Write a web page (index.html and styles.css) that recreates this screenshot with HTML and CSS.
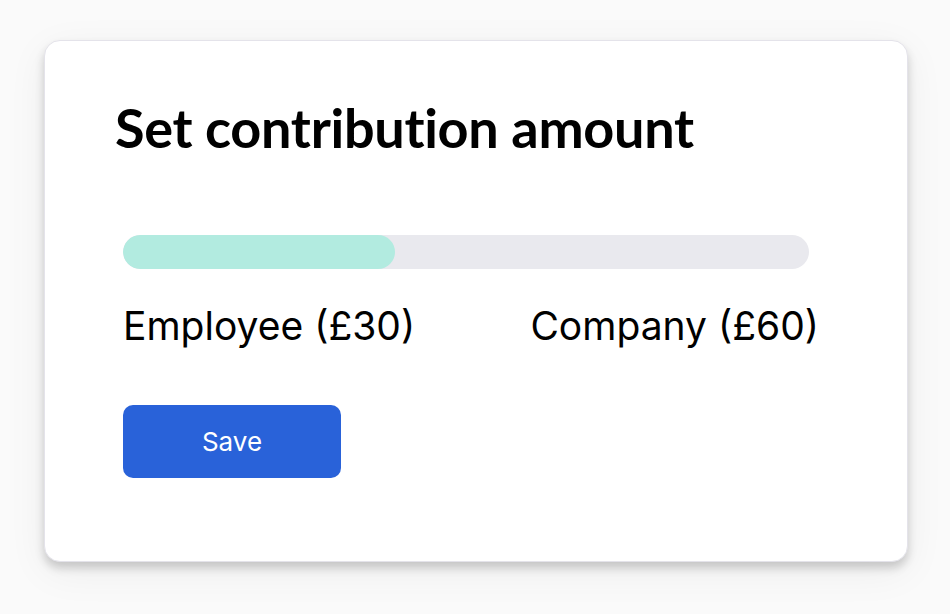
FILE: index.html
```html
<!doctype html>
<html lang="en">
  <head>
    <meta charset="UTF-8" />
    <meta name="viewport" content="width=device-width, initial-scale=1.0" />
    <title>Set contribution amount</title>
    <link rel="stylesheet" href="styles.css">
  </head>
  <body>
    <div class="card">
      <h1 class="title">Set contribution amount</h1>
      <div class="content">
        <div class="bar">
          <div class="bar-fill" style="width: 39.7%"></div>
        </div>
        <div class="labels">
          <span>Employee (£30)</span>
          <span>Company (£60)</span>
        </div>
        <button class="save" type="button">Save</button>
      </div>
    </div>
  </body>
</html>
```

FILE: styles.css
```css
body {
  margin: 0;
  padding: 40px 0 0 44px;
  background: #fafafa;
  font-family: Inter, "Liberation Sans", sans-serif;
  height: 614px;
  box-sizing: border-box;
}
.card {
  width: 864px;
  height: 522px;
  box-sizing: border-box;
  background: #fff;
  border-radius: 16px;
  border: 1px solid #e4e3ea;
  box-shadow: 0 6px 10px rgba(0, 0, 0, 0.18), 0 10px 40px rgba(0, 0, 0, 0.06);
  padding: 57px 0 0 70px;
}
.title {
  margin: 0;
  font-family: Lato, sans-serif;
  font-weight: 700;
  font-size: 54px;
  line-height: 60px;
  color: #000;
  letter-spacing: -0.3px;
}
.content {
  padding-left: 8px;
  width: 686px;
}
.bar {
  margin-top: 77px;
  height: 34px;
  border-radius: 17px;
  background: #e9e9ee;
  overflow: hidden;
}
.bar-fill {
  height: 100%;
  border-radius: 17px;
  background: #b2ebe0;
}
.labels {
  display: flex;
  justify-content: space-between;
  width: 696px;
  margin-top: 35px;
  font-size: 39px;
  line-height: 44px;
  color: #000;
}
.save {
  display: block;
  margin-top: 57px;
  width: 218px;
  height: 73px;
  border: none;
  border-radius: 10px;
  background: #2962d9;
  color: #fff;
  font-family: Inter, sans-serif;
  font-size: 26px;
}
```
